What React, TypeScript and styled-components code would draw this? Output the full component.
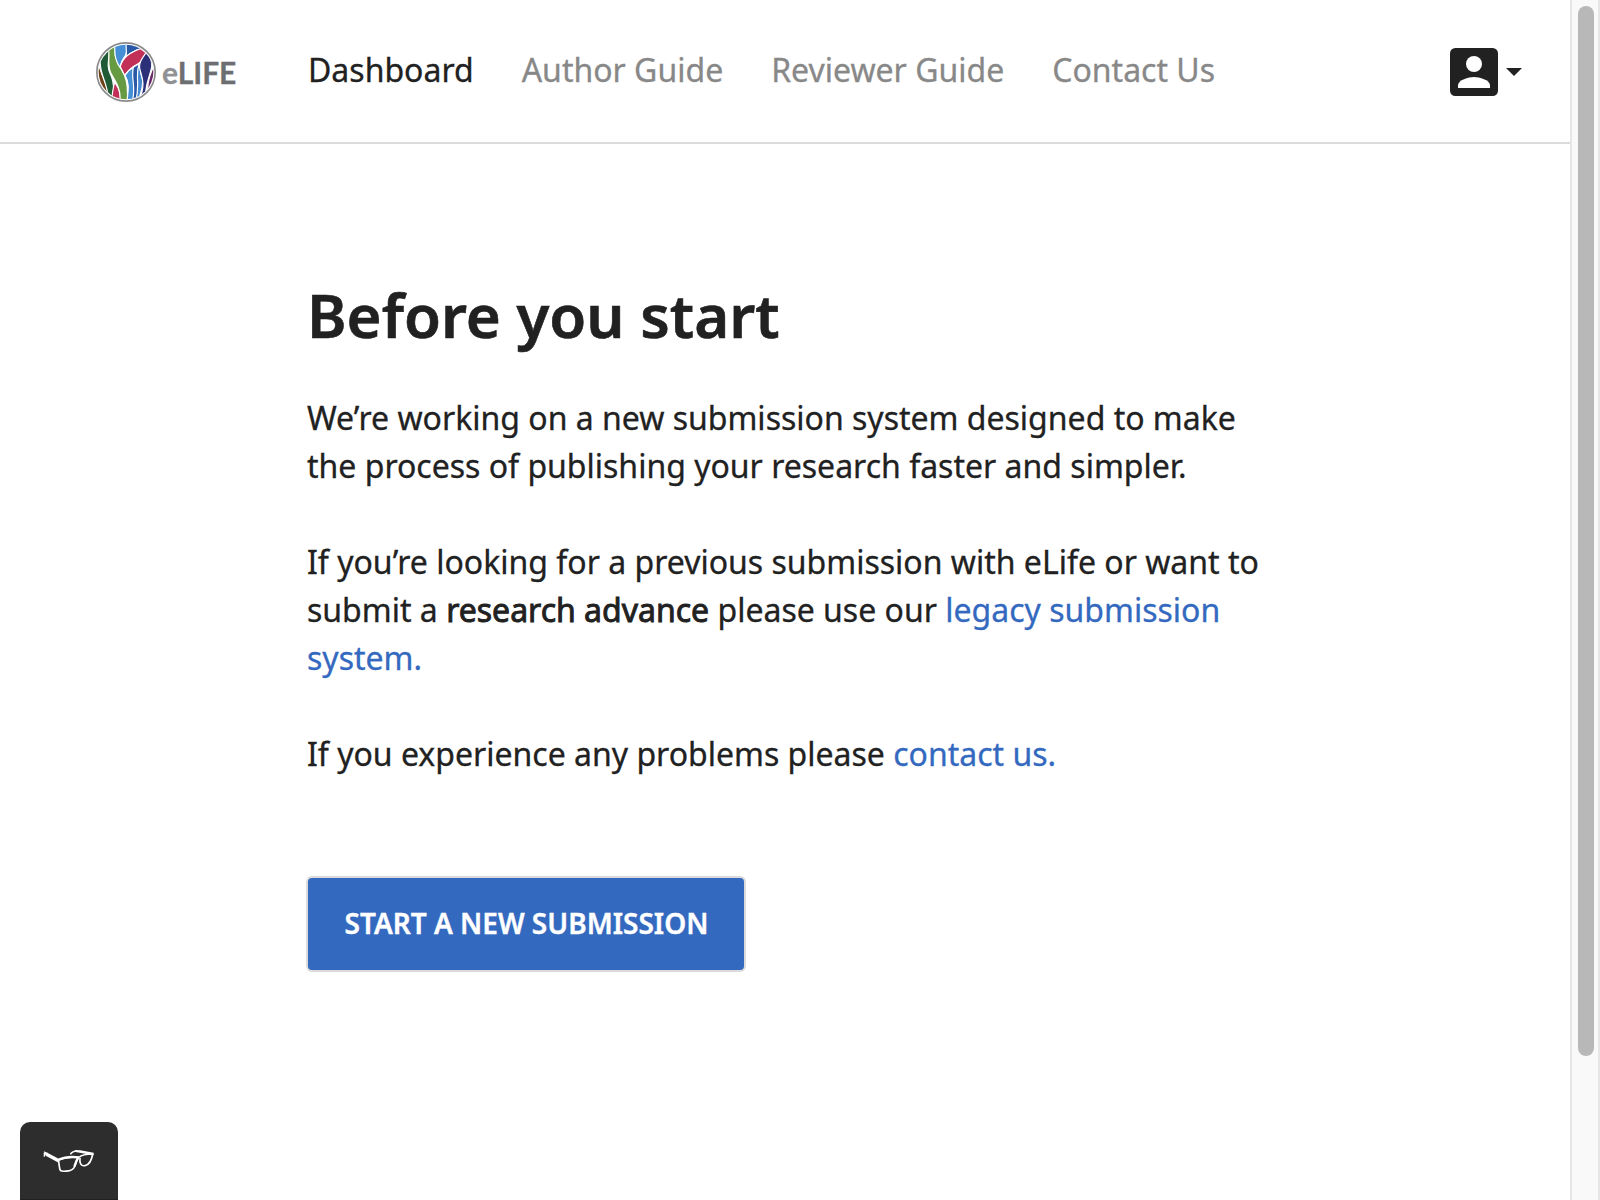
import React from "react";
import styled, { createGlobalStyle } from "styled-components";

const GlobalStyle = createGlobalStyle`
  *, *::before, *::after { box-sizing: border-box; }
  body {
    margin: 0;
    background: #fff;
    color: #212121;
    font-family: "Noto Sans", sans-serif;
    font-size: 32px;
    line-height: 48px;
    -webkit-text-stroke: 0.3px currentColor;
  }
`;

const Screen = styled.div`
  display: grid;
  grid-template-columns: 1fr 30px;
  width: 1600px;
  height: 1200px;
  overflow: hidden;
`;

const Page = styled.div`
  display: flex;
  flex-direction: column;
  min-width: 0;
`;

const Header = styled.header`
  display: flex;
  align-items: center;
  height: 144px;
  padding: 2px 48px 0 96px;
  border-bottom: 2px solid #dbdbdb;
`;

const Brand = styled.a`
  display: flex;
  align-items: center;
  gap: 6px;
  width: 212px;
`;

const BrandMark = styled.svg`
  width: 60px;
  height: 60px;
`;

const BrandName = styled.span`
  font-family: Lato, sans-serif;
  font-size: 30px;
  font-weight: 700;
  line-height: 36px;
  color: #6d6e71;
`;

const BrandInitial = styled.span`
  color: #8f9194;
`;

const Nav = styled.nav`
  display: flex;
  gap: 48px;
  flex: 1;
  padding-bottom: 4px;
`;

const NavItem = styled.a<{ $active?: boolean }>`
  color: ${({ $active }) => ($active ? "#212121" : "#888888")};
  white-space: nowrap;
`;

const Account = styled.button`
  display: flex;
  align-items: center;
  gap: 8px;
  padding: 0;
  border: 0;
  background: none;
`;

const AccountIcon = styled.svg`
  width: 48px;
  height: 48px;
`;

const Caret = styled.svg`
  width: 16px;
  height: 8px;
`;

const Content = styled.main`
  flex: 1;
  width: 1263px;
  padding: 129px 0 0 307px;
`;

const Title = styled.h1`
  margin: 0 0 37px;
  font-size: 60px;
  font-weight: 600;
  line-height: 84px;
  -webkit-text-stroke-width: 0.6px;
`;

const Paragraph = styled.p`
  margin: 0 0 48px;
`;

const Strong = styled.strong`
  font-weight: 400;
  -webkit-text-stroke: 0.9px currentColor;
`;

const Link = styled.a`
  color: #3469c0;
`;

const SubmitButton = styled.button`
  display: flex;
  align-items: center;
  justify-content: center;
  width: 440px;
  height: 96px;
  margin: 98px 0 0 -1px;
  padding: 0 0 2px 1px;
  border: 2px solid #dbdbdb;
  border-radius: 6px;
  background: #3469c0;
  color: #fff;
  font: 600 28px/48px "Noto Sans", sans-serif;
  text-transform: uppercase;
  -webkit-text-stroke: 0.4px currentColor;
`;

const ReaderTab = styled.aside`
  display: flex;
  justify-content: center;
  width: 98px;
  height: 78px;
  margin-left: 20px;
  padding-top: 27px;
  border-radius: 10px 10px 0 0;
  border-bottom: 1px solid #241f20;
  background: #2d2d2d;
`;

const Glasses = styled.svg`
  width: 52px;
  height: 24px;
`;

const ScrollTrack = styled.div`
  padding: 6px 4px 0 6px;
  border: solid #e6e6e6;
  border-width: 0 2px;
  background: #f9f9f9;
`;

const ScrollThumb = styled.div`
  width: 16px;
  height: 1050px;
  border-radius: 8px;
  background: #b8b8b8;
`;

const links = ["Dashboard", "Author Guide", "Reviewer Guide", "Contact Us"];

function Logo() {
  return (
    <BrandMark viewBox="33 36 180 180">
      <defs>
        <clipPath id="disc">
          <circle cx="123" cy="126" r="82" />
        </clipPath>
      </defs>
      <circle cx="123" cy="126" r="87.5" fill="#fff" stroke="#8b8b8b" strokeWidth="5" />
      <g clipPath="url(#disc)" stroke="#fff" strokeWidth="3.5" strokeLinejoin="round">
        <path d="M36 100L45 116C52 144 66 160 70 190L60 200L30 170Z" fill="#6b4218" />
        <path d="M74 56L46 88C42 134 66 150 70 206L88 210C84 180 90 160 76 132C64 108 72 90 74 56Z" fill="#1f5c36" />
        <path d="M89 156C98 172 107 180 107 214L82 212C80 180 86 174 89 156Z" fill="#c22f57" />
        <path d="M70 52L92 40C86 76 94 96 108 116C122 138 130 160 127 214L105 214C108 178 94 158 80 134C64 108 76 84 70 52Z" fill="#669b43" />
        <path d="M91 36L128 36C120 54 132 66 116 84C108 94 108 104 105 112C90 92 86 70 91 36Z" fill="#448fd6" />
        <path d="M125 36L172 42L166 57C146 62 134 70 122 82C128 64 120 56 125 36Z" fill="#2858a6" />
        <path d="M106 110C114 78 138 68 166 56L184 68C176 84 170 96 158 102C142 110 130 120 119 136Z" fill="#c22f57" />
        <path d="M120 136C128 124 134 118 146 112C138 142 156 166 144 214L126 214C130 180 134 158 120 136Z" fill="#448fd6" />
        <path d="M145 112L164 100C152 134 168 156 155 214L142 214C154 170 137 146 145 112Z" fill="#2858a6" />
        <path d="M162 102C168 100 162 122 171 142C178 166 168 180 162 206L152 214C166 160 150 142 162 102Z" fill="#4388d0" />
        <path d="M186 64C174 82 162 94 164 114C168 138 184 156 164 208L182 192C182 160 196 136 200 110C202 92 196 80 186 64Z" fill="#2b3078" />
        <path d="M208 100C202 124 188 140 188 180L214 160Z" fill="#6a2767" />
      </g>
    </BrandMark>
  );
}

export default function App() {
  return (
    <>
      <GlobalStyle />
      <Screen>
        <Page>
          <Header>
            <Brand>
              <Logo />
              <BrandName>
                <BrandInitial>e</BrandInitial>LIFE
              </BrandName>
            </Brand>
            <Nav>
              {links.map((label, i) => (
                <NavItem key={label} $active={i === 0}>
                  {label}
                </NavItem>
              ))}
            </Nav>
            <Account>
              <AccountIcon viewBox="0 0 48 48">
                <rect width="48" height="48" rx="5.3" fill="#212121" />
                <circle cx="24" cy="16" r="8" fill="#fff" />
                <path d="M8 40v-2.700c0-5.300 10.700-8.300 16-8.300s16 3 16 8.300V40z" fill="#fff" />
              </AccountIcon>
              <Caret viewBox="0 0 16 8">
                <path d="M0 0h16L8 8z" fill="#212121" />
              </Caret>
            </Account>
          </Header>
          <Content>
            <Title>Before you start</Title>
            <Paragraph>
              We’re working on a new submission system designed to make the process of publishing
              your research faster and simpler.
            </Paragraph>
            <Paragraph>
              If you’re looking for a previous submission with eLife or want to submit a{" "}
              <Strong>research advance</Strong> please use our <Link>legacy submission system.</Link>
            </Paragraph>
            <Paragraph>
              If you experience any problems please <Link>contact us.</Link>
            </Paragraph>
            <SubmitButton>Start a new submission</SubmitButton>
          </Content>
          <ReaderTab>
            <Glasses viewBox="100 117 156 72">
              <g fill="none" stroke="#fff" strokeLinejoin="round">
                <path d="M104 140V128" strokeWidth="4" />
                <path d="M102 124L110 127L150 148L147 158L108 137Z" fill="#fff" stroke="none" />
                <path d="M146 150C164 142 184 141 205 143C196 160 198 178 180 182C168 184 156 185 152 181C148 174 149 160 146 150Z" strokeWidth="5" />
                <path d="M145 150C164 141 190 139 208 142" strokeWidth="6" />
                <path d="M208 142C214 136 230 132 249 132C246 150 240 164 226 167C214 169 209 160 211 144" strokeWidth="5" />
                <path d="M206 143C200 150 198 160 194 170" strokeWidth="7" />
                <path d="M182 133C188 124 194 122 204 123" strokeWidth="4.500" />
                <path d="M196 120L212 121L252 128V136L226 131L198 126Z" fill="#fff" stroke="none" />
              </g>
            </Glasses>
          </ReaderTab>
        </Page>
        <ScrollTrack>
          <ScrollThumb />
        </ScrollTrack>
      </Screen>
    </>
  );
}
